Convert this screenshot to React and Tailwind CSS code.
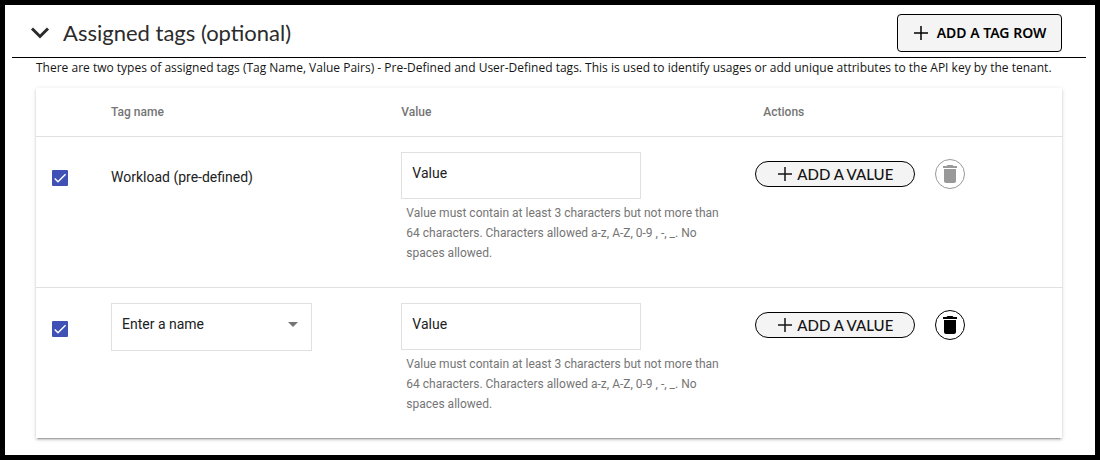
import React from "react";

function PlusIcon() {
  return (
    <svg className="size-4 shrink-0" viewBox="0 0 16 16" fill="none" stroke="currentColor" strokeWidth="1.5" aria-hidden="true">
      <path d="M8 1v14M1 8h14" />
    </svg>
  );
}

function TrashIcon() {
  return (
    <svg className="size-6 shrink-0" viewBox="0 0 24 24" fill="currentColor" aria-hidden="true">
      <path d="M6 19c0 1.1.9 2 2 2h8c1.1 0 2-.9 2-2V7H6v12zM19 4h-3.5l-1-1h-5l-1 1H5v2h14V4z" />
    </svg>
  );
}

function RowCheckbox({ label }) {
  return (
    <span className="grid size-4">
      <input
        type="checkbox"
        defaultChecked
        aria-label={label}
        className="peer col-start-1 row-start-1 size-4 appearance-none rounded-[1px] border-2 border-gray-500 checked:border-[#3f51b5] checked:bg-[#3f51b5]"
      />
      <svg
        className="pointer-events-none invisible col-start-1 row-start-1 size-4 text-white peer-checked:visible"
        viewBox="0 0 24 24"
        fill="none"
        stroke="currentColor"
        strokeWidth="2.2"
        aria-hidden="true"
      >
        <path d="M4.1 12.7 9 17.6 20.3 6.3" />
      </svg>
    </span>
  );
}

function ValueField({ id }) {
  return (
    <div>
      <input
        id={id}
        type="text"
        placeholder="Value"
        aria-label="Value"
        aria-describedby={`${id}-hint`}
        className="block h-[47px] w-60 max-w-full border border-[#e0e0e0] bg-white px-[10px] pb-1 text-sm text-[#212121] placeholder:text-[#212121]"
      />
      <p id={`${id}-hint`} className="max-w-80 pt-1 pl-[5px] text-xs leading-5 text-[#757575]">
        Value must contain at least 3 characters but not more than 64 characters. Characters allowed a-z, A-Z, 0-9 , -, _. No spaces allowed.
      </p>
    </div>
  );
}

function NameSelect() {
  return (
    <div className="grid w-[201px] max-w-full items-center">
      <select
        aria-label="Tag name"
        className="col-start-1 row-start-1 h-12 w-full appearance-none border border-[#e0e0e0] bg-white px-[10px] pb-1.5 text-sm text-[#212121]"
      >
        <option>Enter a name</option>
      </select>
      <svg
        className="pointer-events-none col-start-1 row-start-1 mr-[14px] mb-1 h-[5px] w-[10px] justify-self-end text-[#757575]"
        viewBox="0 0 10 5"
        fill="currentColor"
        aria-hidden="true"
      >
        <path d="M0 0h10L5 5z" />
      </svg>
    </div>
  );
}

function TagRow({ id, name, children, locked }) {
  return (
    <tr className="h-[151px] border-t border-[#e0e0e0] align-top">
      <td className="pt-[33px] pl-4">
        <RowCheckbox label={name} />
      </td>
      <td className="pt-[15px]">{children}</td>
      <td className="pt-[15px]">
        <ValueField id={id} />
      </td>
      <td className="pt-[22px]">
        <div className="flex items-center gap-5">
          <button
            type="button"
            className="flex h-[26px] w-40 items-center justify-center gap-1 rounded-full border border-black bg-[#f4f4f4] font-[Lato,sans-serif] text-[15px] font-medium text-[#151515]"
          >
            <PlusIcon />
            <span className="pt-0.5">ADD A VALUE</span>
          </button>
          <button
            type="button"
            aria-label="Delete row"
            disabled={locked}
            className="flex size-[30px] items-center justify-center rounded-full border border-black text-black disabled:border-[#999] disabled:text-[#999]"
          >
            <TrashIcon />
          </button>
        </div>
      </td>
    </tr>
  );
}

export default function App() {
  return (
    <main className="min-h-screen border-5 border-black bg-white font-[Roboto,sans-serif] text-[#212121]">
      <section className="pt-[9px] pr-[9px] pb-4 pl-[7px]">
        <header className="flex items-center justify-between border-b border-black pr-6 pb-[5px]">
          <h2 className="font-[Lato,sans-serif] text-[22px] leading-7 text-[#2b2b2b]">
            <button type="button" aria-expanded="true" className="flex items-center gap-3 pl-[17px]">
              <svg className="h-3 w-[22px] text-[#2b2b2b]" viewBox="0 0 22 12" fill="none" stroke="currentColor" strokeWidth="3" aria-hidden="true">
                <path d="m3 1.5 8 8 8-8" />
              </svg>
              Assigned tags (optional)
            </button>
          </h2>
          <button
            type="button"
            className="flex h-[38px] w-[165px] items-center justify-center gap-2 rounded border border-black bg-[#f4f4f4] font-['Noto_Sans',sans-serif] text-sm font-semibold text-black"
          >
            <PlusIcon />
            ADD A TAG ROW
          </button>
        </header>

        <p className="pl-6 font-['Open_Sans',sans-serif] text-xs leading-5 text-[#151515]">
          There are two types of assigned tags (Tag Name, Value Pairs) - Pre-Defined and User-Defined tags. This is used to identify usages or add unique attributes to the API key by the tenant.
        </p>

        <div className="mt-[10px] mr-6 ml-6 shadow-[0_3px_1px_-2px_rgba(0,0,0,0.2),0_2px_2px_0_rgba(0,0,0,0.14),0_1px_5px_0_rgba(0,0,0,0.12)]">
          <table className="w-full table-fixed border-collapse text-left text-sm">
            <colgroup>
              <col className="w-[75px]" />
              <col className="w-[28.3%]" />
              <col className="w-[34.5%]" />
              <col />
            </colgroup>
            <thead>
              <tr className="h-12 text-xs text-[#757575]">
                <td />
                <th scope="col" className="font-medium">Tag name</th>
                <th scope="col" className="font-medium">Value</th>
                <th scope="col" className="pl-2 font-medium">Actions</th>
              </tr>
            </thead>
            <tbody>
              <TagRow id="workload-value" name="Workload (pre-defined)" locked>
                <span className="block pt-[15px]">Workload (pre-defined)</span>
              </TagRow>
              <TagRow id="custom-value" name="User-defined tag">
                <NameSelect />
              </TagRow>
            </tbody>
          </table>
        </div>
      </section>
    </main>
  );
}
